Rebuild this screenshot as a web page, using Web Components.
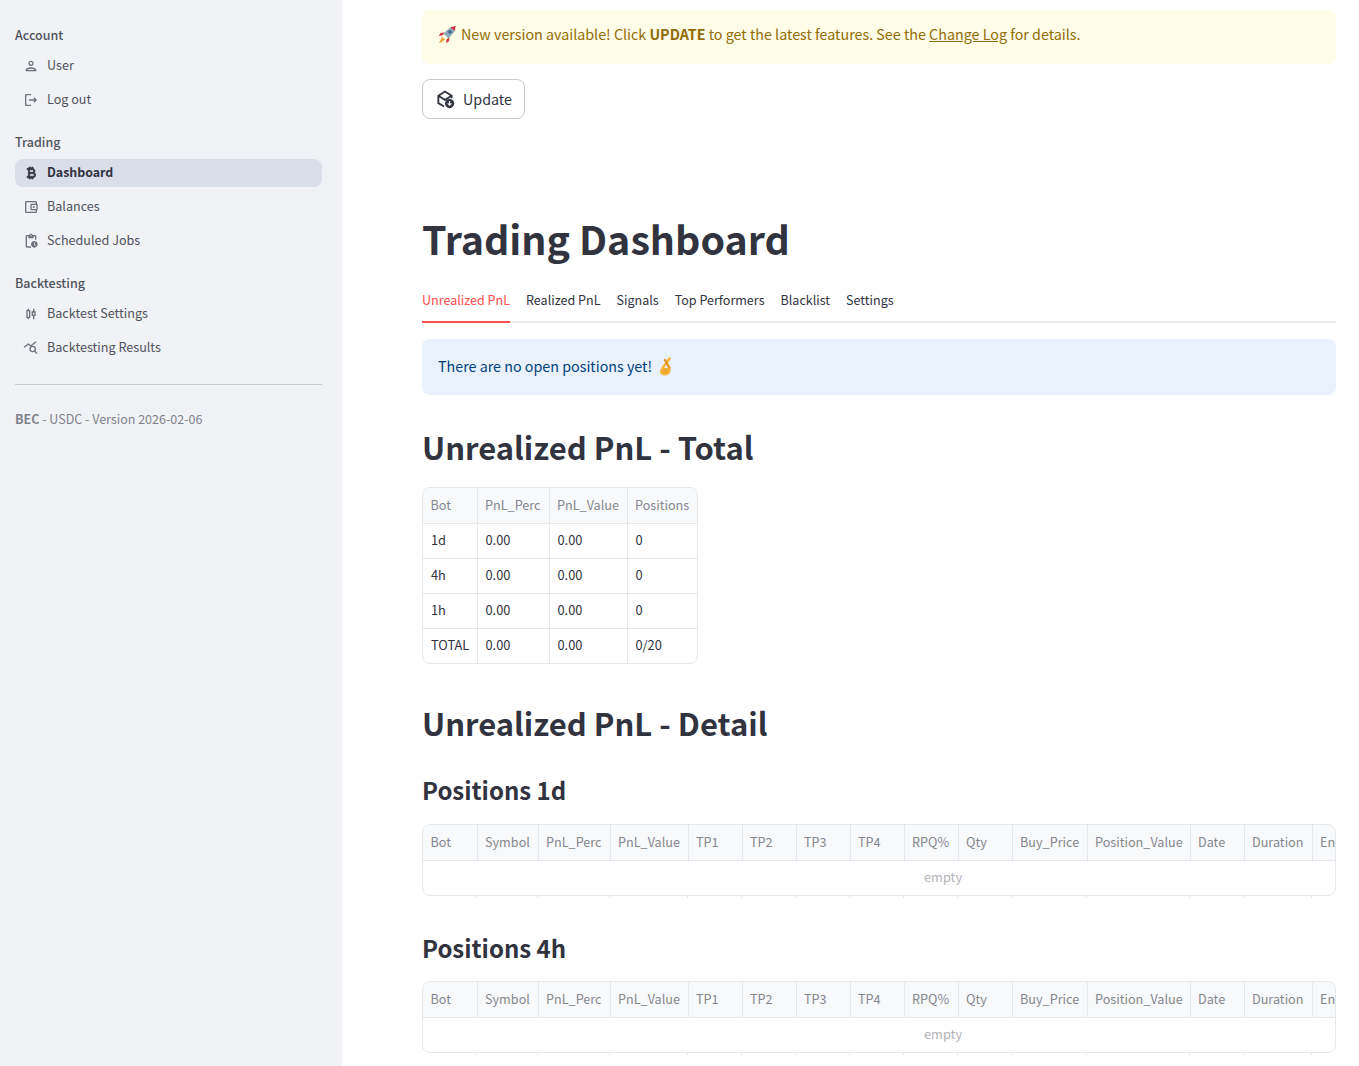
<!DOCTYPE html>
<html>
<head>
<meta charset="utf-8">
<title>Trading Dashboard</title>
<style>
  html, body { margin: 0; height: 100%; overflow: hidden; background: #fff; }
  body { font-family: "Noto Sans CJK SC", "Source Sans Pro", "Noto Sans", sans-serif; color: #31333f; }
</style>
</head>
<body>
<app-shell>
  <side-bar slot="side">
    <nav-group label="Account">
      <nav-item icon="user">User</nav-item>
      <nav-item icon="logout">Log out</nav-item>
    </nav-group>
    <nav-group label="Trading">
      <nav-item icon="bitcoin" active>Dashboard</nav-item>
      <nav-item icon="wallet">Balances</nav-item>
      <nav-item icon="jobs">Scheduled Jobs</nav-item>
    </nav-group>
    <nav-group label="Backtesting">
      <nav-item icon="candles">Backtest Settings</nav-item>
      <nav-item icon="results">Backtesting Results</nav-item>
    </nav-group>
    <version-note><b>BEC</b> - USDC - Version 2026-02-06</version-note>
  </side-bar>

  <alert-box kind="warning"><svg slot="lead" width="19" height="19" viewBox="0 0 19 19"><path d="M5.500 8.500 L12 2.500 L17 1.500 L16.500 6.500 L10.500 13.500z" fill="#8fa9bb"/><path d="M12.500 2.300 L17.700 .9 L16.700 6z" fill="#d8343c"/><circle cx="12" cy="7" r="1.800" fill="#35688f"/><path d="M6.500 7.500 L2.500 8 L.8 11 L4.800 10.300z M11.500 12.500 L11 16.300 L8 18 L8.700 14z" fill="#d8343c"/><path d="M4.200 11.800 L7 14.500 L3 17.500 L1 18z" fill="#f2a23a"/></svg>New version available! Click <b>UPDATE</b> to get the latest features. See the <u>Change Log</u> for details.</alert-box>
  <update-button>Update</update-button>

  <page-title>Trading Dashboard</page-title>

  <tab-bar>
    <span class="on">Unrealized PnL</span><span>Realized PnL</span><span>Signals</span><span>Top Performers</span><span>Blacklist</span><span>Settings</span>
  </tab-bar>

  <alert-box kind="info">There are no open positions yet!<svg slot="trail" width="15" height="19" viewBox="0 0 15 19"><g fill="none" stroke-linecap="round"><path d="M4.500 11 L11.500 1.600" stroke-width="2.600" stroke="#f6b53a"/><path d="M7 3 L11.500 11" stroke-width="2.400" stroke="#e2941f"/></g><path d="M2.500 12 Q4 10.500 8 11 L12 10.500 Q13.500 13 12 15.500 Q10.500 18.500 6.500 18.500 Q2 18 2 14.500z" fill="#f6b53a"/><path d="M4.500 13.500 L10.500 12.800 M5 15.800 L10 15" stroke="#d98d1e" stroke-width=".8" fill="none"/></svg></alert-box>

  <section-title level="2" style="--top:32px">Unrealized PnL - Total</section-title>
  <data-table style="--top:20px" widths="54,72,78,70" cols="Bot,PnL_Perc,PnL_Value,Positions"
    rows="1d,0.00,0.00,0|4h,0.00,0.00,0|1h,0.00,0.00,0|TOTAL,0.00,0.00,0/20"></data-table>

  <section-title level="2" style="--top:39px">Unrealized PnL - Detail</section-title>
  <section-title level="3" style="--top:31px">Positions 1d</section-title>
  <data-table style="--top:18px" full widths="54,61,72,78,54,54,54,54,54,54,75,103,54,68,151"
    cols="Bot,Symbol,PnL_Perc,PnL_Value,TP1,TP2,TP3,TP4,RPQ%,Qty,Buy_Price,Position_Value,Date,Duration,Entry"></data-table>

  <section-title level="3" style="--top:34px">Positions 4h</section-title>
  <data-table style="--top:17px" full widths="54,61,72,78,54,54,54,54,54,54,75,103,54,68,151"
    cols="Bot,Symbol,PnL_Perc,PnL_Value,TP1,TP2,TP3,TP4,RPQ%,Qty,Buy_Price,Position_Value,Date,Duration,Entry"></data-table>
</app-shell>

<script>
// material icon paths, 24 unit box
const ICONS = {
  user: '<path d="M12 6c1.100 0 2 .9 2 2s-.9 2-2 2-2-.9-2-2 .9-2 2-2m0 10c2.700 0 5.800 1.290 6 2H6c.23-.72 3.310-2 6-2m0-12C9.790 4 8 5.790 8 8s1.790 4 4 4 4-1.790 4-4-1.790-4-4-4zm0 10c-2.670 0-8 1.340-8 4v2h16v-2c0-2.660-5.330-4-8-4z"/>',
  logout: '<path d="M17 8l-1.410 1.410L17.170 11H9v2h8.170l-1.580 1.580L17 16l4-4-4-4zM5 5h7V3H5c-1.100 0-2 .9-2 2v14c0 1.100.9 2 2 2h7v-2H5V5z"/>',
  bitcoin: '<path stroke="currentColor" stroke-width="1" d="M17.060 11.570c.59-.69.94-1.590.94-2.570 0-1.860-1.270-3.430-3-3.870V3h-2v2h-2V3H9v2H6v2h2v10H6v2h3v2h2v-2h2v2h2v-2c2.210 0 4-1.790 4-4 0-1.450-.78-2.730-1.940-3.430zM10 7h4c1.100 0 2 .9 2 2s-.9 2-2 2h-4V7zm5 10h-5v-4h5c1.100 0 2 .9 2 2s-.9 2-2 2z"/>',
  wallet: '<path d="M21 7.280V5c0-1.100-.9-2-2-2H5c-1.110 0-2 .9-2 2v14c0 1.100.89 2 2 2h14c1.100 0 2-.9 2-2v-2.280c.59-.35 1-.98 1-1.720V9c0-.74-.41-1.370-1-1.720zM20 9v6h-7V9h7zM5 19V5h14v2h-6c-1.100 0-2 .9-2 2v6c0 1.100.9 2 2 2h6v2H5z"/><circle cx="16" cy="12" r="1.500"/>',
  jobs: '<path d="M17 12c-2.760 0-5 2.240-5 5s2.240 5 5 5 5-2.240 5-5-2.240-5-5-5zm1.650 7.350L16.500 17.200V14h1v2.790l1.850 1.850-.7.71zM18 3h-3.180C14.400 1.840 13.300 1 12 1s-2.400.84-2.820 2H6c-1.100 0-2 .9-2 2v15c0 1.100.9 2 2 2h6v-2H6V5h2v3h8V5h2v5h2V5c0-1.100-.9-2-2-2zm-6 2c-.55 0-1-.45-1-1s.45-1 1-1 1 .45 1 1-.45 1-1 1z"/>',
  candles: '<path d="M9 4H7v2H5v12h2v2h2v-2h2V6H9V4zm0 12H7V8h2v8zm10-8h-2V4h-2v4h-2v7h2v5h2v-5h2V8zm-2 5h-2v-3h2v3z"/>',
  results: '<g fill="none" stroke="currentColor" stroke-width="2"><path d="M1.500 11 L8 6 L11.500 9 L19.500 2.500"/><circle cx="14.500" cy="13.500" r="4"/><path d="M17.500 16.500 L21 20.500"/></g>'
};

customElements.define('app-shell', class AppShell extends HTMLElement {
  constructor() {
    super();
    this.attachShadow({mode: 'open'});
    this.shadowRoot.innerHTML = this.template;
  }
  get template() {
    return `<style>
      :host {
        display: flex;
        height: 1066px;
        overflow: hidden;
      }
      main {
        flex: 1;
        min-width: 0;
        box-sizing: border-box;
        display: flex;
        flex-direction: column;
        padding: 10px 23px 0 80px;
      }
    </style>
    <slot name="side"></slot>
    <main><slot></slot></main>
    `
  }
});

customElements.define('side-bar', class SideBar extends HTMLElement {
  constructor() {
    super();
    this.attachShadow({mode: 'open'});
    this.shadowRoot.innerHTML = this.template;
  }
  get template() {
    return `<style>
      :host {
        display: flex;
        flex-direction: column;
        flex: 0 0 342px;
        box-sizing: border-box;
        width: 342px;
        background: #f0f2f6;
        padding: 24px 20px 0 15px;
      }
    </style>
    <slot></slot>
    `
  }
});

customElements.define('nav-group', class NavGroup extends HTMLElement {
  constructor() {
    super();
    this.attachShadow({mode: 'open'});
    this.shadowRoot.innerHTML = this.template;
    this.shadowRoot.querySelector('h4').textContent = this.getAttribute('label');
  }
  get template() {
    return `<style>
      :host {
        display: flex;
        flex-direction: column;
        gap: 6px;
        margin-bottom: 17px;
      }
      h4 {
        margin: 0;
        height: 22px;
        line-height: 22px;
        font-size: 12.500px;
        font-weight: 500;
        color: #50525d;
      }
    </style>
    <h4></h4>
    <slot></slot>
    `
  }
});

customElements.define('nav-item', class NavItem extends HTMLElement {
  constructor() {
    super();
    this.attachShadow({mode: 'open'});
    this.shadowRoot.innerHTML = this.template;
    this.shadowRoot.querySelector('svg').innerHTML = ICONS[this.getAttribute('icon')];
  }
  get template() {
    return `<style>
      :host {
        display: flex;
        align-items: center;
        gap: 8px;
        height: 28px;
        padding-left: 8px;
        border-radius: 8px;
        font-size: 12.600px;
        color: #50525d;
      }
      :host([active]) {
        background: #dadee9;
        color: #31333f;
        font-weight: 600;
        font-size: 12.400px;
      }
      svg {
        width: 16px;
        height: 16px;
        fill: currentColor;
        opacity: .8;
      }
      :host([active]) svg { opacity: 1; }
      span { line-height: 20px; padding-bottom: 2px; }
    </style>
    <svg viewBox="0 0 24 24"></svg>
    <span><slot></slot></span>
    `
  }
});

customElements.define('version-note', class VersionNote extends HTMLElement {
  constructor() {
    super();
    this.attachShadow({mode: 'open'});
    this.shadowRoot.innerHTML = this.template;
  }
  get template() {
    return `<style>
      :host {
        display: block;
        margin-top: 5px;
        border-top: 1px solid #c9cbd1;
        padding-top: 24px;
        font-size: 12.500px;
        line-height: 20px;
        color: #80828b;
      }
      ::slotted(b) { font-weight: 600; }
    </style>
    <slot></slot>
    `
  }
});

customElements.define('alert-box', class AlertBox extends HTMLElement {
  constructor() {
    super();
    this.attachShadow({mode: 'open'});
    this.shadowRoot.innerHTML = this.template;
  }
  get template() {
    return `<style>
      :host {
        display: block;
        box-sizing: border-box;
        flex: none;
        height: 56px;
        padding: 15px 16px;
        border-radius: 8px;
        font-size: 14.300px;
        line-height: 24px;
        white-space: nowrap;
      }
      :host([kind=warning]) {
        background: #fffce7;
        height: 54px;
        padding-top: 12px;
        color: #926c05;
      }
      :host([kind=info]) {
        background: #e9f1fc;
        color: #004280;
      }
      ::slotted(b) { font-weight: 600; }
      slot[name=lead]::slotted(svg) { vertical-align: -4px; margin-right: 4px; }
      slot[name=trail]::slotted(svg) { vertical-align: -4px; margin-left: 6px; }
    </style>
    <slot name="lead"></slot><slot></slot><slot name="trail"></slot>
    `
  }
});

customElements.define('update-button', class UpdateButton extends HTMLElement {
  constructor() {
    super();
    this.attachShadow({mode: 'open'});
    this.shadowRoot.innerHTML = this.template;
  }
  get template() {
    return `<style>
      :host {
        display: flex;
        flex: none;
        align-items: center;
        gap: 8px;
        align-self: flex-start;
        box-sizing: border-box;
        height: 40px;
        margin-top: 15px;
        padding: 0 12px 0 12px;
        border: 1px solid #c9cad0;
        border-radius: 8px;
        font-size: 14.300px;
        color: #31333f;
      }
      svg { width: 20px; height: 20px; fill: none; stroke: currentColor; stroke-width: 2.200; }
      span { padding-bottom: 2px; }
    </style>
    <svg viewBox="0 0 24 24">
      <path d="M11 21 L4 17 V8 L12 3 L20 8 V11 M4 8 L12 13 L20 8"/>
      <circle cx="17.500" cy="17.500" r="5.500" fill="currentColor" stroke="none"/>
      <path d="M17.500 14.500v5M15.300 17.300l2.200 2.200 2.200-2.200" stroke="#fff" stroke-width="1.300"/>
    </svg>
    <span><slot></slot></span>
    `
  }
});

customElements.define('page-title', class PageTitle extends HTMLElement {
  constructor() {
    super();
    this.attachShadow({mode: 'open'});
    this.shadowRoot.innerHTML = this.template;
  }
  get template() {
    return `<style>
      :host {
        display: block;
        flex: none;
        margin-top: 92px;
        height: 54px;
        line-height: 54px;
        font-size: 39.400px;
        font-weight: 700;
        color: #31333f;
      }
    </style>
    <slot></slot>
    `
  }
});

customElements.define('tab-bar', class TabBar extends HTMLElement {
  constructor() {
    super();
    this.attachShadow({mode: 'open'});
    this.shadowRoot.innerHTML = this.template;
  }
  get template() {
    return `<style>
      :host {
        display: flex;
        flex: none;
        gap: 16px;
        height: 42px;
        margin-top: 16px;
        margin-bottom: 16px;
        border-bottom: 2px solid #e9e9eb;
        box-sizing: border-box;
        font-size: 12.550px;
        color: #31333f;
      }
      ::slotted(span) {
        height: 42px;
        line-height: 38px;
        box-sizing: border-box;
      }
      ::slotted(.on) {
        color: #ff4b4b;
        border-bottom: 2px solid #ff4b4b;
      }
    </style>
    <slot></slot>
    `
  }
});

customElements.define('section-title', class SectionTitle extends HTMLElement {
  constructor() {
    super();
    this.attachShadow({mode: 'open'});
    this.shadowRoot.innerHTML = this.template;
  }
  get template() {
    return `<style>
      :host {
        display: block;
        flex: none;
        margin-top: var(--top, 0);
        height: 40px;
        line-height: 40px;
        font-size: 31px;
        font-weight: 600;
        color: #31333f;
      }
      :host([level="3"]) {
        height: 32px;
        line-height: 32px;
        font-size: 24px;
      }
    </style>
    <slot></slot>
    `
  }
});

customElements.define('data-table', class DataTable extends HTMLElement {
  constructor() {
    super();
    this.attachShadow({mode: 'open'});
    const widths = this.getAttribute('widths').split(',');
    const cols = this.getAttribute('cols').split(',');
    const rows = (this.getAttribute('rows') || '').split('|').filter(Boolean).map(r => r.split(','));
    const total = widths.reduce((a, b) => a + +b, 0);
    const body = rows.length
      ? rows.map(r => `<tr>${r.map(c => `<td>${c}</td>`).join('')}</tr>`).join('')
      : `<tr><td class="empty" colspan="${cols.length}">empty</td></tr>`;
    // empty tables keep little column ticks under the frame
    const ticks = rows.length ? '' : `<div class="ticks">${widths.map(w => `<i style="flex:0 0 ${w}px"></i>`).join('')}</div>`;
    this.shadowRoot.innerHTML = this.template + `
      <div class="wrap"><table style="width:${total}px">
        <colgroup>${widths.map(w => `<col style="width:${w}px">`).join('')}</colgroup>
        <thead><tr>${cols.map(c => `<th>${c}</th>`).join('')}</tr></thead>
        <tbody>${body}</tbody>
      </table></div>${ticks}`;
  }
  get template() {
    return `<style>
      :host {
        display: block;
        flex: none;
        align-self: flex-start;
        margin-top: var(--top, 0);
        font-size: 12.800px;
      }
      :host([full]) { align-self: stretch; }
      .wrap {
        box-sizing: border-box;
        border: 1px solid #e6e7ea;
        border-radius: 8px;
        overflow: hidden;
        width: fit-content;
      }
      :host([full]) .wrap { width: 100%; }
      table {
        border-collapse: collapse;
        table-layout: fixed;
      }
      th, td {
        box-sizing: border-box;
        height: 35px;
        padding: 0 8px 3px;
        border-left: 1px solid #e6e7ea;
        border-top: 1px solid #e6e7ea;
        text-align: left;
        font-weight: 400;
        white-space: nowrap;
        overflow: hidden;
      }
      th:first-child, td:first-child { border-left: 0; }
      thead th {
        border-top: 0;
        background: #f8f9fb;
        color: #85878f;
        font-size: 12.650px;
        padding: 0 8px 1px 7.500px;
      }
      td { color: #31333f; }
      td.empty {
        text-align: center;
        color: #b3b3b8;
        padding: 0 0 3px;
      }
      .ticks {
        display: flex;
        height: 2px;
        overflow: hidden;
        padding-left: 1px;
      }
      .ticks i {
        box-sizing: border-box;
        border-right: 1px solid #e6e7ea;
      }
    </style>`
  }
});
</script>
</body>
</html>
